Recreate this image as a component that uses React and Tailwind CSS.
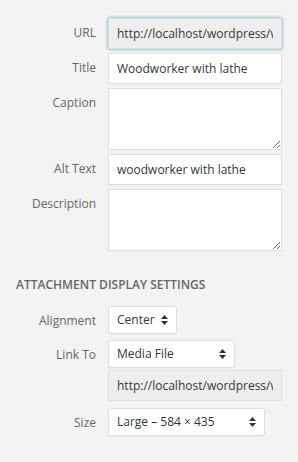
import React from 'react';

const font = { fontFamily: '"Open Sans", "Liberation Sans", sans-serif' };

function Arrows() {
    return (
        <svg width="7" height="10" viewBox="0 0 7 10" className="shrink-0">
            <path d="M3.5 0 L7 4 L0 4 Z" fill="#333" />
            <path d="M0 6 L7 6 L3.5 10 Z" fill="#333" />
        </svg>
    );
}

function Label({ children }) {
    return (
        <div className="text-right text-[12px] leading-[18px] text-[#666] pt-[6px]">{children}</div>
    );
}

function Select({ value, width }) {
    return (
        <div className={`${width} h-[28px] flex items-center justify-between bg-white border border-[#ddd] rounded-[3px] pl-[8px] pr-[8px] text-[12px] text-[#32373c] shadow-[0_1px_1px_rgba(0,0,0,0.04)]`}>
            <span>{value}</span>
            <Arrows />
        </div>
    );
}

export default function App() {
    const inputBase = "w-[174px] h-[31px] border border-[#ddd] px-[8px] text-[12px] text-[#32373c] outline-none";
    const areaBase = "w-[174px] h-[62px] border border-[#ddd] bg-white px-[8px] py-[4px] text-[12px] text-[#32373c] outline-none block";

    return (
        <div className="w-[298px] h-[462px] bg-[#f3f3f3] pt-[18px]" style={font}>
            <div className="grid grid-cols-[96px_174px] gap-x-[12px] gap-y-[4px]">
                <Label>URL</Label>
                <input
                    readOnly
                    value="http://localhost/wordpress/wp-content/uploads/woodworker.jpg"
                    className={`${inputBase} bg-[#eee] border-[#5b9dd9] shadow-[0_0_3px_rgba(30,140,190,0.8)]`}
                    style={font}
                />
                <Label>Title</Label>
                <input readOnly value="Woodworker with lathe" className={`${inputBase} bg-white`} style={font} />
                <Label>Caption</Label>
                <textarea readOnly className={areaBase} style={font} />
                <Label>Alt Text</Label>
                <input readOnly value="woodworker with lathe" className={`${inputBase} bg-white`} style={font} />
                <Label>Description</Label>
                <textarea readOnly className={areaBase} style={font} />
            </div>

            <h2 className="mt-[26px] ml-[16px] text-[12px] font-semibold uppercase text-[#666] leading-[16px]">
                Attachment Display Settings
            </h2>

            <div className="grid grid-cols-[96px_174px] gap-x-[12px] mt-[13px]">
                <Label>Alignment</Label>
                <Select value="Center" width="w-[69px]" />
                <div className="h-[6px] col-span-2" />
                <Label>Link To</Label>
                <Select value="Media File" width="w-[127px]" />
                <div className="h-[2px] col-span-2" />
                <div />
                <input
                    readOnly
                    value="http://localhost/wordpress/wp-content/uploads/woodworker.jpg"
                    className={`${inputBase} bg-[#eee]`}
                    style={font}
                />
                <div className="h-[7px] col-span-2" />
                <Label>Size</Label>
                <Select value="Large – 584 × 435" width="w-[157px]" />
            </div>
        </div>
    );
}
